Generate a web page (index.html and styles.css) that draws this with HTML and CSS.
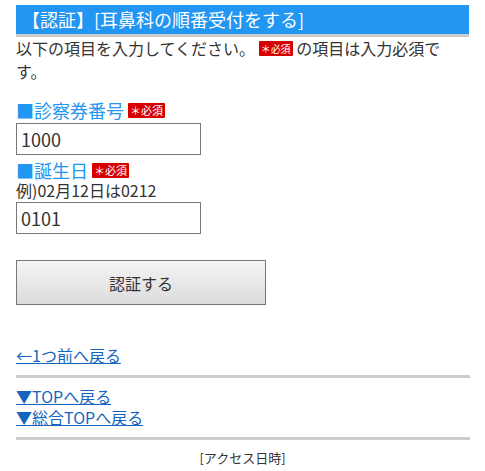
FILE: index.html
```html
<!DOCTYPE html>
<html lang="ja">
<head>
    <meta charset="UTF-8">
    <meta name="viewport" content="width=device-width, initial-scale=1.0">
    <title>認証 - 耳鼻科の順番受付</title>
    <link rel="stylesheet" href="styles.css">
</head>
<body>
    <div class="page">
        <h1 class="title">【認証】[耳鼻科の順番受付をする]</h1>
        <p class="intro">以下の項目を入力してください。 <span class="req">＊必須</span> の項目は入力必須です。</p>

        <form class="auth-form" onsubmit="return false;">
            <div class="field">
                <label class="label" for="card">■診察券番号 <span class="req">＊必須</span></label>
                <input class="text-input" type="text" id="card" value="1000">
            </div>
            <div class="field">
                <label class="label" for="birth">■誕生日 <span class="req">＊必須</span></label>
                <div class="hint">例)02月12日は0212</div>
                <input class="text-input" type="text" id="birth" value="0101">
            </div>
            <button class="submit-btn" type="submit">認証する</button>
        </form>

        <div class="back">
            <a href="#">←1つ前へ戻る</a>
        </div>

        <hr class="line">

        <ul class="nav">
            <li><a href="#">▼TOPへ戻る</a></li>
            <li><a href="#">▼総合TOPへ戻る</a></li>
        </ul>

        <hr class="line">

        <div class="access">[アクセス日時]</div>
    </div>
</body>
</html>
```

FILE: styles.css
```css
* {
    margin: 0;
    padding: 0;
    box-sizing: border-box;
}

body {
    font-family: "Noto Sans CJK JP", "Noto Sans", sans-serif;
    color: #333;
    background: #fff;
}

.page {
    padding: 5px 16px 0;
}

.title {
    background: #2196f3;
    color: #fff;
    font-size: 18px;
    font-weight: normal;
    line-height: 29px;
    padding: 0 6px;
    border-bottom: 3px solid #ccc;
}

.intro {
    font-size: 16px;
    line-height: 23px;
}

.req {
    display: inline-block;
    background: #d60000;
    color: #fff;
    font-size: 10px;
    line-height: 15px;
    padding: 0 2px;
    border-radius: 1px;
    vertical-align: 2px;
}

.auth-form {
    margin-top: 14px;
}

.field {
    margin-bottom: 2px;
}

.label {
    display: block;
    color: #2196f3;
    font-size: 18px;
    line-height: 26px;
}

.label .req {
    font-size: 11px;
    vertical-align: 3px;
}

.hint {
    font-size: 16px;
    line-height: 17px;
    margin: -1px 0 3px;
}

.text-input {
    display: block;
    width: 185px;
    height: 32px;
    border: 1px solid #777;
    padding: 0 4px;
    font-family: inherit;
    font-size: 18px;
    color: #333;
}

.submit-btn {
    display: block;
    width: 250px;
    height: 45px;
    margin-top: 26px;
    border: 1px solid #777;
    background: linear-gradient(#f4f4f4, #dcdcdc);
    font-family: inherit;
    font-size: 16px;
    color: #333;
    cursor: pointer;
}

.back {
    margin-top: 39px;
    font-size: 16px;
    line-height: 22px;
}

a {
    color: #1565c0;
}

.line {
    border: none;
    height: 3px;
    background: #ccc;
    margin: 9px 0 8px;
    width: 454px;
}

.nav {
    list-style: none;
    font-size: 16px;
    line-height: 21px;
}

.access {
    text-align: center;
    font-size: 13px;
    line-height: 20px;
}
```
